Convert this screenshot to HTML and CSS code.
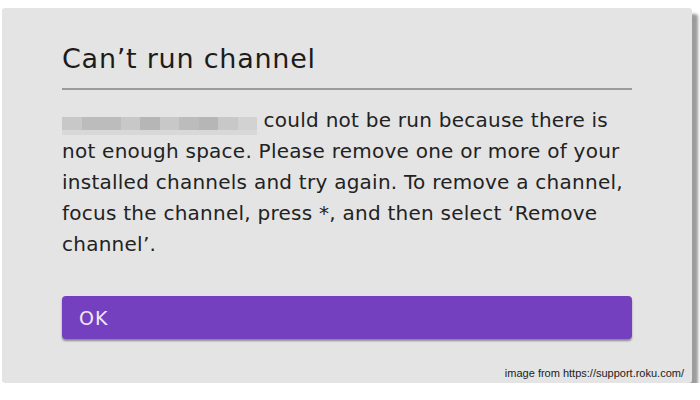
FILE: index.html
```html
<!DOCTYPE html>
<html>
<head>
  <title>Can't run channel</title>
  <meta charset="UTF-8">
  <link rel="stylesheet" href="styles.css">
</head>
<body>
  <div class="dialog">
    <h1>Can’t run channel</h1>
    <p class="message">
      <span class="redacted">
        <i></i><i class="d"></i><i class="d"></i><i></i><i class="dd"></i><i></i><i class="d"></i><i class="dd"></i><i></i><i class="l"></i>
      </span>
      could not be run because there is not enough space. Please remove one or more of your installed channels and try again. To remove a channel, focus the channel, press *, and then select ‘Remove channel’.
    </p>
    <button class="ok">OK</button>
    <p class="credit">image from https://support.roku.com/</p>
  </div>
</body>
</html>
```

FILE: styles.css
```css
body {
  margin: 0;
  background: #fff;
  font-family: 'DejaVu Sans', 'Open Sans', sans-serif;
}

.dialog {
  box-sizing: border-box;
  width: 690px;
  height: 375px;
  margin: 8px 0 0 2px;
  padding: 0 60px;
  background: #e4e4e4;
  border-radius: 3px;
  box-shadow: 6px 6px 3px #9c9c9c;
  display: flex;
  flex-direction: column;
}

h1 {
  margin: 33px 0 0;
  padding-bottom: 11px;
  border-bottom: 2px solid #9a9a9a;
  font-size: 27px;
  font-weight: normal;
  letter-spacing: 0.75px;
  line-height: 36px;
  color: #1c1c1c;
}

.message {
  margin: 15px 0 0;
  font-size: 20px;
  letter-spacing: 0.25px;
  line-height: 31px;
  color: #222;
}

.redacted {
  display: inline-flex;
  vertical-align: -3px;
  height: 18px;
  background: linear-gradient(#c6c6c6 0 13px, #d8d8d8 13px);
}

.redacted i {
  width: 19.5px;
  height: 13px;
  background: #c8c8c8;
}

.redacted i.d { background: #bcbcbc; }
.redacted i.dd { background: #b6b6b6; }
.redacted i.l { background: #d2d2d2; }

.ok {
  margin-top: 36px;
  height: 43px;
  padding: 0 17px;
  border: none;
  border-radius: 4px;
  background: #7540c0;
  box-shadow: 0 2px 2px #8a8a8a;
  color: #f2e8f6;
  font-family: inherit;
  font-size: 19px;
  letter-spacing: 1px;
  text-align: left;
}

.credit {
  margin: auto -52px 4px 0;
  text-align: right;
  font-family: 'Liberation Sans', sans-serif;
  font-size: 11px;
  color: #222;
}
```
